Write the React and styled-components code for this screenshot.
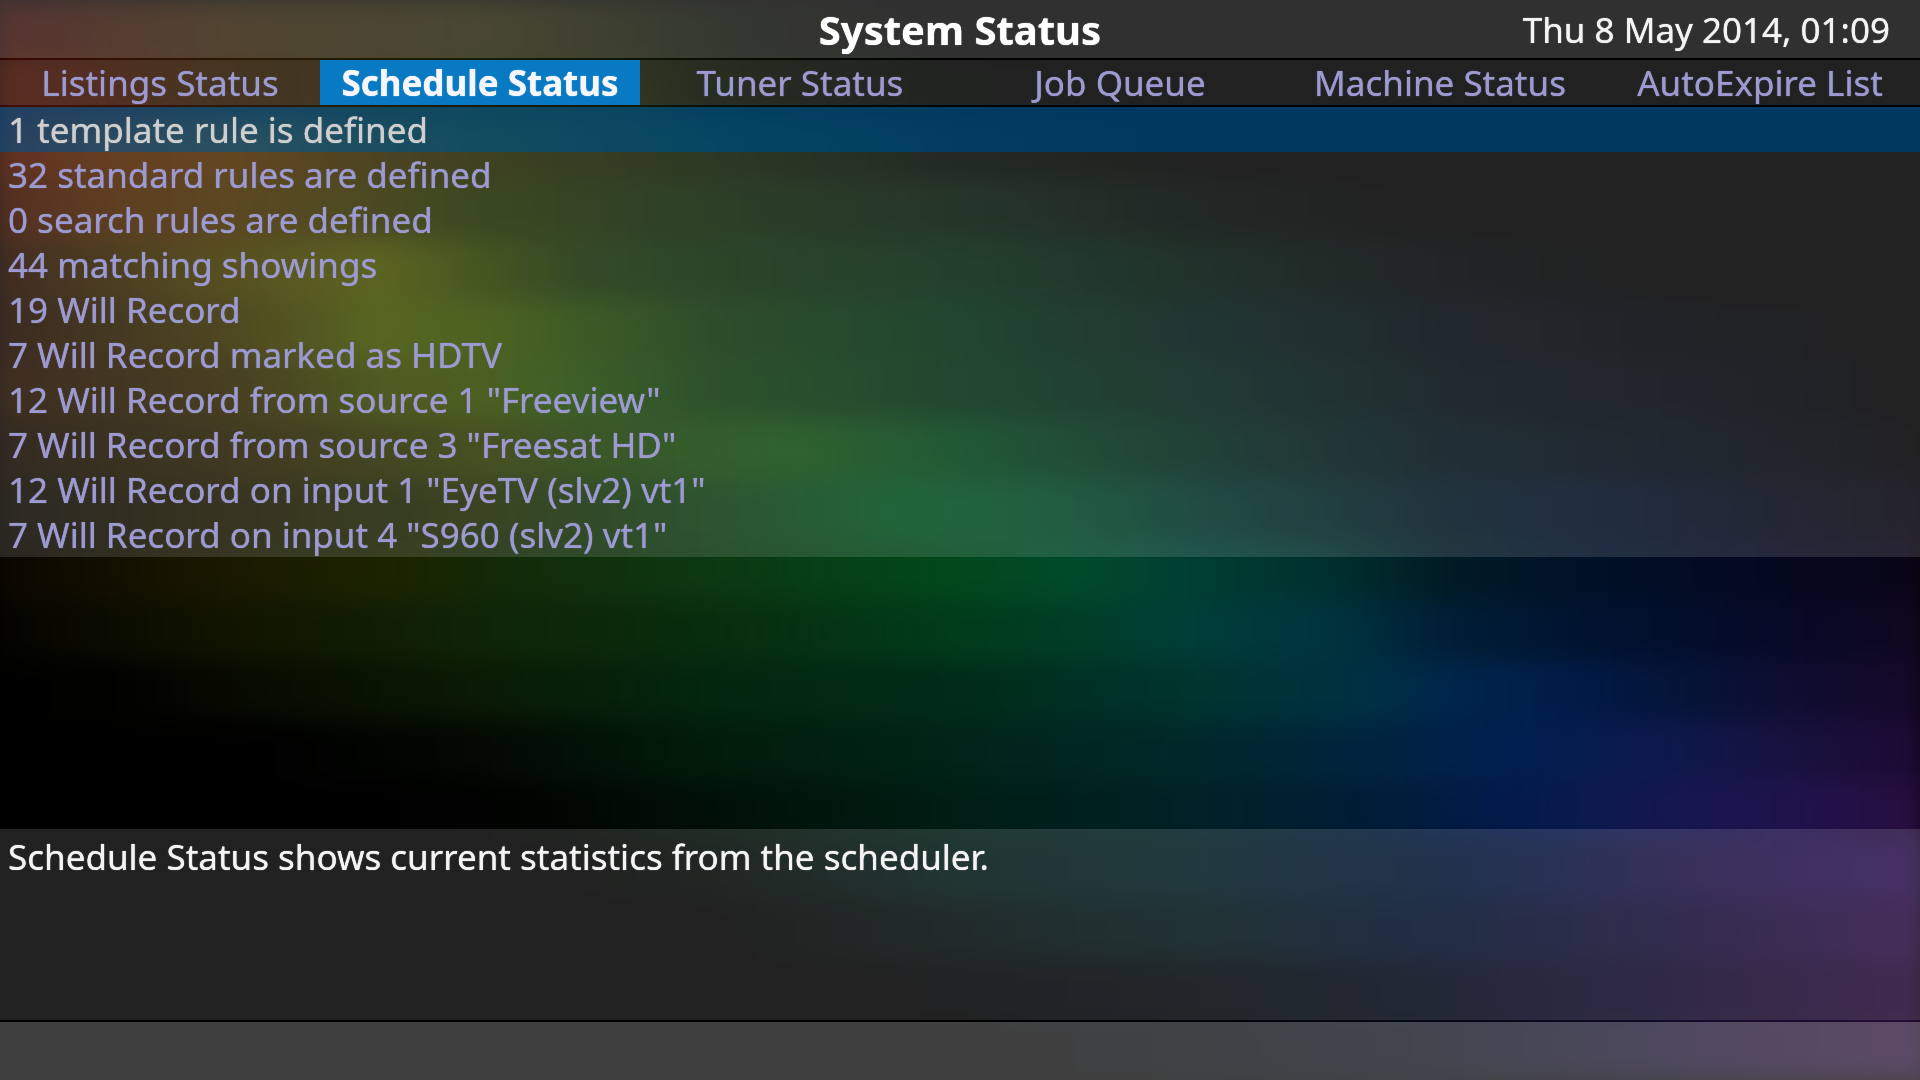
import React, { useState } from "react";
import styled, { createGlobalStyle, css } from "styled-components";

const GlobalStyle = createGlobalStyle`
  *, *::before, *::after { box-sizing: border-box; }
  body {
    margin: 0;
    background: #000;
    font-family: "Noto Sans", "Open Sans", sans-serif;
    font-size: 35px;
    line-height: 45px;
    color: #f4f4f4;
    text-shadow: 0 0 1px currentColor;
  }
`;

/* Wallpaper: horizontal bands, each a list of [percent across, r, g, b]. */
const BANDS = [
  [[0, 49, 5, 2], [12, 42, 25, 2], [25, 30, 30, 3], [37, 8, 12, 0], [48, 0, 0, 0]],
  [[0, 68, 12, 0], [3, 62, 14, 0], [12, 42, 23, 0], [25, 26, 28, 0], [33, 17, 24, 0], [37, 6, 15, 0], [50, 0, 3, 0], [58, 0, 0, 0]],
  [[0, 73, 17, 0], [6, 80, 34, 0], [12, 76, 44, 0], [25, 34, 38, 0], [37, 14, 28, 4], [50, 2, 10, 3], [64, 0, 0, 0]],
  [[0, 58, 14, 0], [6, 70, 34, 0], [12, 68, 44, 0], [18, 54, 48, 0], [25, 30, 46, 0], [37, 14, 36, 8], [50, 5, 24, 10], [62, 1, 9, 6], [74, 0, 0, 0]],
  [[0, 36, 12, 0], [12, 62, 54, 0], [20, 68, 77, 0], [25, 44, 62, 0], [30, 24, 48, 6], [37, 13, 42, 10], [50, 3, 36, 14], [62, 0, 20, 12], [75, 0, 5, 6], [87, 0, 0, 0]],
  [[0, 30, 10, 0], [12, 52, 44, 0], [20, 62, 80, 0], [25, 52, 76, 0], [31, 32, 66, 6], [37, 15, 52, 12], [50, 0, 43, 17], [62, 0, 25, 20], [75, 0, 9, 14], [87, 1, 3, 6], [100, 0, 0, 0]],
  [[0, 34, 14, 0], [12, 44, 34, 0], [20, 52, 66, 0], [25, 50, 72, 0], [29, 36, 74, 8], [37, 15, 56, 12], [50, 0, 45, 18], [62, 0, 31, 22], [75, 0, 12, 17], [87, 1, 5, 12], [100, 0, 0, 0]],
  [[0, 20, 10, 0], [12, 36, 28, 0], [25, 43, 54, 2], [33, 28, 64, 10], [41, 17, 76, 15], [50, 1, 64, 24], [62, 0, 38, 26], [75, 0, 16, 24], [87, 1, 8, 18], [100, 2, 1, 2]],
  [[0, 12, 10, 2], [12, 26, 22, 1], [25, 28, 40, 1], [37, 14, 58, 17], [47, 1, 79, 31], [54, 0, 72, 36], [62, 0, 50, 40], [75, 0, 22, 34], [83, 0, 14, 35], [100, 6, 3, 13]],
  [[0, 10, 6, 0], [12, 25, 25, 0], [21, 28, 36, 0], [25, 20, 40, 6], [37, 12, 56, 17], [50, 0, 72, 28], [56, 0, 74, 42], [62, 0, 62, 50], [69, 0, 48, 46], [75, 0, 27, 36], [83, 0, 16, 38], [87, 2, 12, 36], [100, 10, 4, 22]],
  [[0, 4, 3, 0], [12, 17, 20, 0], [25, 15, 36, 6], [37, 8, 44, 14], [50, 0, 60, 26], [56, 0, 62, 38], [62, 0, 62, 56], [69, 0, 52, 62], [75, 0, 30, 54], [83, 0, 18, 46], [94, 8, 8, 38], [100, 16, 8, 30]],
  [[0, 0, 0, 0], [6, 1, 1, 0], [12, 7, 9, 0], [25, 10, 26, 4], [37, 2, 38, 14], [50, 0, 44, 24], [62, 0, 52, 46], [71, 0, 48, 66], [75, 0, 38, 74], [81, 0, 28, 72], [87, 4, 20, 56], [94, 16, 12, 46], [100, 20, 8, 40]],
  [[0, 0, 0, 0], [14, 0, 0, 0], [25, 3, 8, 2], [37, 1, 28, 10], [50, 0, 36, 24], [62, 0, 40, 42], [71, 0, 36, 62], [79, 0, 30, 80], [87, 14, 24, 74], [94, 24, 16, 60], [100, 28, 10, 50]],
  [[0, 0, 0, 0], [20, 0, 0, 0], [27, 1, 3, 1], [37, 1, 16, 7], [50, 0, 30, 20], [62, 0, 33, 38], [71, 0, 28, 54], [79, 3, 26, 76], [87, 22, 23, 80], [94, 32, 18, 74], [100, 40, 12, 60]],
  [[0, 0, 0, 0], [28, 0, 0, 0], [37, 0, 6, 3], [50, 0, 24, 20], [62, 0, 28, 34], [75, 0, 20, 50], [81, 10, 20, 60], [87, 26, 18, 66], [94, 36, 18, 76], [100, 46, 18, 80]],
  [[0, 0, 0, 0], [37, 0, 0, 0], [50, 0, 13, 11], [62, 0, 20, 22], [75, 1, 15, 42], [87, 20, 13, 52], [100, 44, 15, 66]],
  [[0, 0, 0, 0], [44, 0, 0, 0], [62, 0, 7, 10], [75, 3, 9, 26], [87, 18, 10, 44], [100, 40, 11, 56]],
  [[0, 0, 0, 0], [50, 0, 0, 0], [62, 0, 3, 5], [75, 4, 8, 22], [87, 20, 13, 42], [100, 40, 13, 52]],
];

const gradient = (stops) =>
  `linear-gradient(90deg, ${stops
    .map(([at, r, g, b]) => `rgb(${r}, ${g}, ${b}) ${at}%`)
    .join(", ")})`;

const Wallpaper = styled.div`
  position: fixed;
  inset: 0;
  z-index: -1;
  display: flex;
  flex-direction: column;
  overflow: hidden;
  background: #000;
`;

const WallpaperBands = styled.div`
  flex: 1;
  display: flex;
  flex-direction: column;
  margin: 0 -8px;
  filter: blur(12px);
`;

const Band = styled.div`
  flex: 1;
  background: ${({ $stops }) => gradient($stops)};
`;

const Screen = styled.div`
  min-height: 100vh;
  display: flex;
  flex-direction: column;
`;

const Header = styled.header`
  display: grid;
  grid-template-columns: 1fr auto 1fr;
  align-items: center;
  height: 58px;
  padding: 0 30px;
  background: rgba(255, 255, 255, 0.19);
`;

const Title = styled.h1`
  grid-column: 2;
  margin: 0;
  font-size: 40px;
  font-weight: 700;
  color: #fff;
`;

const Clock = styled.time`
  justify-self: end;
  white-space: nowrap;
`;

const Tabs = styled.nav`
  display: grid;
  grid-template-columns: repeat(6, 1fr);
  margin: 2px 0;
`;

const Tab = styled.button`
  height: 45px;
  padding: 0;
  border: 0;
  font: inherit;
  text-shadow: inherit;
  white-space: nowrap;
  cursor: pointer;
  color: #9c9ad0;
  background: rgba(255, 255, 255, 0.13);
  ${({ $active }) =>
    $active &&
    css`
      font-weight: 700;
      color: #f6f6ff;
      background: #0879c3;
    `}
`;

const StatusList = styled.ul`
  margin: 0;
  padding: 0;
  list-style: none;
`;

const StatusRow = styled.li`
  padding: 0 8px;
  color: ${({ $selected }) => ($selected ? "#cfcfcf" : "#9c9ad0")};
  background: ${({ $selected }) =>
    $selected ? "rgba(0, 125, 213, 0.45)" : "rgba(255, 255, 255, 0.13)"};
`;

const Description = styled.section`
  min-height: 191px;
  margin-top: auto;
  padding: 5px 8px;
  background: rgba(255, 255, 255, 0.13);
`;

const DescriptionText = styled.p`
  margin: 0;
`;

const Footer = styled.footer`
  height: 58px;
  margin-top: 2px;
  background: rgba(255, 255, 255, 0.25);
`;

const TABS = [
  "Listings Status",
  "Schedule Status",
  "Tuner Status",
  "Job Queue",
  "Machine Status",
  "AutoExpire List",
];

const ROWS = [
  "1 template rule is defined",
  "32 standard rules are defined",
  "0 search rules are defined",
  "44 matching showings",
  "19 Will Record",
  "7 Will Record marked as HDTV",
  '12 Will Record from source 1 "Freeview"',
  '7 Will Record from source 3 "Freesat HD"',
  '12 Will Record on input 1 "EyeTV (slv2) vt1"',
  '7 Will Record on input 4 "S960 (slv2) vt1"',
];

export default function App() {
  const [tab, setTab] = useState("Schedule Status");
  const [row, setRow] = useState(0);

  return (
    <>
      <GlobalStyle />
      <Wallpaper>
        <WallpaperBands>
          {BANDS.map((stops, i) => (
            <Band key={i} $stops={stops} />
          ))}
        </WallpaperBands>
      </Wallpaper>
      <Screen>
        <Header>
          <Title>System Status</Title>
          <Clock dateTime="2014-05-08T01:09">Thu 8 May 2014, 01:09</Clock>
        </Header>
        <Tabs>
          {TABS.map((name) => (
            <Tab
              key={name}
              type="button"
              $active={name === tab}
              aria-pressed={name === tab}
              onClick={() => setTab(name)}
            >
              {name}
            </Tab>
          ))}
        </Tabs>
        <StatusList>
          {ROWS.map((text, i) => (
            <StatusRow key={text} $selected={i === row} onClick={() => setRow(i)}>
              {text}
            </StatusRow>
          ))}
        </StatusList>
        <Description>
          <DescriptionText>
            Schedule Status shows current statistics from the scheduler.
          </DescriptionText>
        </Description>
        <Footer />
      </Screen>
    </>
  );
}
